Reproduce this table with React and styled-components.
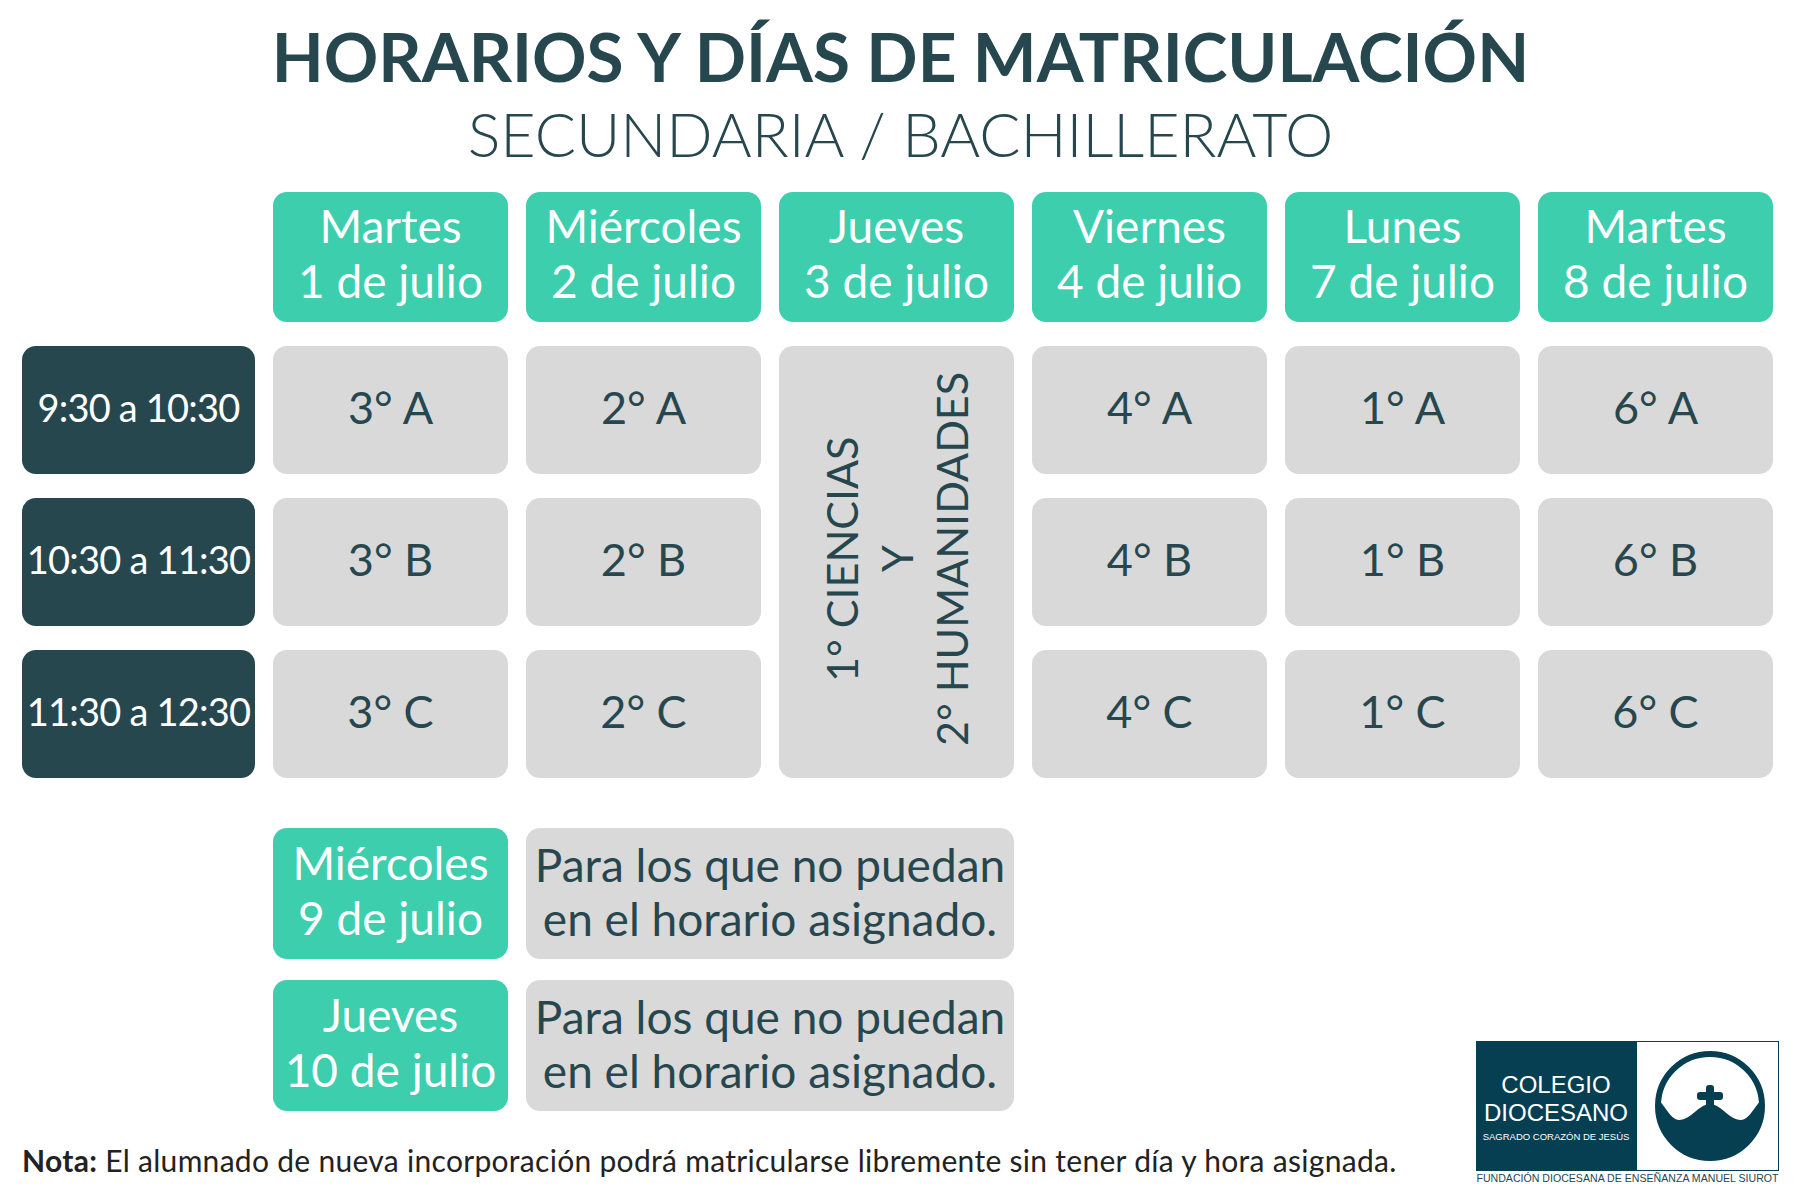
import React from "react";
import styled, { createGlobalStyle } from "styled-components";

const GlobalStyle = createGlobalStyle`
  html, body {
    margin: 0;
    padding: 0;
    background: #fff;
  }
  body {
    font-family: "Lato", "Noto Sans", sans-serif;
    color: #27474f;
  }
`;

const days = [
  ["Martes", "1 de julio"],
  ["Miércoles", "2 de julio"],
  ["Jueves", "3 de julio"],
  ["Viernes", "4 de julio"],
  ["Lunes", "7 de julio"],
  ["Martes", "8 de julio"],
];

const times = ["9:30 a 10:30", "10:30 a 11:30", "11:30 a 12:30"];
const courses = ["3°", "2°", null, "4°", "1°", "6°"];
const letters = ["A", "B", "C"];

const extras = [
  ["Miércoles", "9 de julio"],
  ["Jueves", "10 de julio"],
];

function App() {
  return (
    <>
      <GlobalStyle />
      <Page>
        <Heading>
          <Title>HORARIOS Y DÍAS DE MATRICULACIÓN</Title>
          <Subtitle>SECUNDARIA / BACHILLERATO</Subtitle>
        </Heading>

        <Schedule>
          <Merged>
            <VerticalText>
              1° CIENCIAS
              <br />Y
              <br />
              2° HUMANIDADES
            </VerticalText>
          </Merged>
          <span />
          {days.map(([d, date], i) => (
            <DayHead key={i}>
              {d}
              <br />
              {date}
            </DayHead>
          ))}
          {letters.map((l, r) => (
            <React.Fragment key={l}>
              <TimeCell>{times[r]}</TimeCell>
              {courses.map((c, i) =>
                c ? <GroupCell key={i}>{c} {l}</GroupCell> : null
              )}
            </React.Fragment>
          ))}
        </Schedule>

        <Lower>
          <LeftCol>
            <Extras>
              {extras.map(([d, date], i) => (
                <React.Fragment key={i}>
                  <span />
                  <DayHead>
                    {d}
                    <br />
                    {date}
                  </DayHead>
                  <Notice>
                    Para los que no puedan
                    <br />
                    en el horario asignado.
                  </Notice>
                </React.Fragment>
              ))}
            </Extras>
            <Note>
              <b>Nota:</b> El alumnado de nueva incorporación podrá matricularse
              libremente sin tener día y hora asignada.
            </Note>
          </LeftCol>

          <Logo>
            <LogoRow>
              <LogoDark>
                <LogoName>COLEGIO</LogoName>
                <LogoName>DIOCESANO</LogoName>
                <LogoSub>SAGRADO CORAZÓN DE JESÚS</LogoSub>
              </LogoDark>
              <LogoMark>
                <svg width="140" height="127" viewBox="0 0 140 127">
                  <defs>
                    <clipPath id="inner">
                      <circle cx="72" cy="63" r="52" />
                    </clipPath>
                  </defs>
                  <g clipPath="url(#inner)">
                    <path
                      d="M10 57 C23 47 29 77 41 77 C53 77 61 61 72 61 C83 61 91 77 103 77 C115 77 121 47 134 57 L134 130 L10 130 Z"
                      fill="#063f52"
                    />
                  </g>
                  <circle cx="72" cy="63" r="52" fill="none" stroke="#063f52" strokeWidth="6" />
                  <rect x="68" y="42" width="8" height="24" rx="3" fill="#063f52" />
                  <rect x="59" y="49" width="26" height="8" rx="3" fill="#063f52" />
                </svg>
              </LogoMark>
            </LogoRow>
            <LogoCaption>FUNDACIÓN DIOCESANA DE ENSEÑANZA MANUEL SIUROT</LogoCaption>
          </Logo>
        </Lower>
      </Page>
    </>
  );
}

const Page = styled.div`
  width: 1800px;
  height: 1200px;
  box-sizing: border-box;
  padding: 18px 21px 0 22px;
  overflow: hidden;
`;

const Heading = styled.div`
  display: flex;
  flex-direction: column;
  align-items: center;
`;

const Title = styled.h1`
  margin: 0;
  font-size: 67.5px;
  font-weight: 700;
  line-height: 76px;
  color: #27474f;
`;

const Subtitle = styled.h2`
  margin: 0;
  font-size: 61px;
  font-weight: 300;
  line-height: 80px;
  color: #27474f;
`;

const Schedule = styled.div`
  margin-top: 18px;
  display: grid;
  grid-template-columns: 233px repeat(6, 235px);
  grid-template-rows: 130px repeat(3, 128px);
  column-gap: 18px;
  row-gap: 24px;
`;

const Cell = styled.div`
  display: flex;
  align-items: center;
  justify-content: center;
  text-align: center;
  border-radius: 14px;
  box-sizing: border-box;
`;

const DayHead = styled(Cell)`
  background: #3ccead;
  color: #fff;
  font-size: 46px;
  line-height: 55px;
  padding-bottom: 8px;
  white-space: nowrap;
`;

const TimeCell = styled(Cell)`
  background: #27474f;
  color: #fff;
  font-size: 38px;
  letter-spacing: -0.8px;
  white-space: nowrap;
  padding-bottom: 6px;
`;

const GroupCell = styled(Cell)`
  background: #d9d9d9;
  color: #27474f;
  font-size: 45px;
  padding-bottom: 6px;
`;

const Merged = styled(Cell)`
  grid-column: 4;
  grid-row: 2 / span 3;
  background: #d9d9d9;
  color: #27474f;
  padding-bottom: 6px;
`;

const VerticalText = styled.div`
  writing-mode: vertical-rl;
  transform: rotate(180deg);
  text-align: center;
  font-size: 43px;
  line-height: 55px;
  white-space: nowrap;
`;

const Lower = styled.div`
  display: flex;
  align-items: flex-end;
  justify-content: space-between;
  margin-top: 50px;
`;

const LeftCol = styled.div`
  display: flex;
  flex-direction: column;
`;

const Extras = styled.div`
  display: grid;
  grid-template-columns: 233px 235px 488px;
  grid-auto-rows: 131px;
  column-gap: 18px;
  row-gap: 21px;
`;

const Notice = styled(Cell)`
  background: #d9d9d9;
  color: #27474f;
  font-size: 46px;
  line-height: 54px;
  white-space: nowrap;
  padding-bottom: 4px;
`;

const Note = styled.p`
  margin: 32px 0 0;
  font-size: 30px;
  line-height: 34px;
  letter-spacing: 0.3px;
  color: #222;
  white-space: nowrap;
`;

const Logo = styled.div`
  display: flex;
  flex-direction: column;
  align-items: stretch;
  margin-bottom: -8px;
`;

const LogoRow = styled.div`
  display: flex;
  height: 130px;
`;

const LogoDark = styled.div`
  width: 160px;
  background: #063f52;
  color: #fff;
  display: flex;
  flex-direction: column;
  align-items: center;
  justify-content: center;
  font-family: "Liberation Sans", "Open Sans", sans-serif;
  padding-top: 2px;
  box-sizing: border-box;
`;

const LogoName = styled.div`
  font-size: 24px;
  line-height: 28px;
  font-weight: 400;
`;

const LogoSub = styled.div`
  margin-top: 4px;
  font-size: 9.5px;
  line-height: 12px;
`;

const LogoMark = styled.div`
  width: 143px;
  border: 1px solid #063f52;
  box-sizing: border-box;
  display: flex;
  align-items: center;
  justify-content: center;
  background: #fff;
`;

const LogoCaption = styled.div`
  font-family: "Liberation Sans", "Open Sans", sans-serif;
  font-size: 10.6px;
  line-height: 14px;
  color: #27474f;
  white-space: nowrap;
  text-align: center;
`;

export default App;
